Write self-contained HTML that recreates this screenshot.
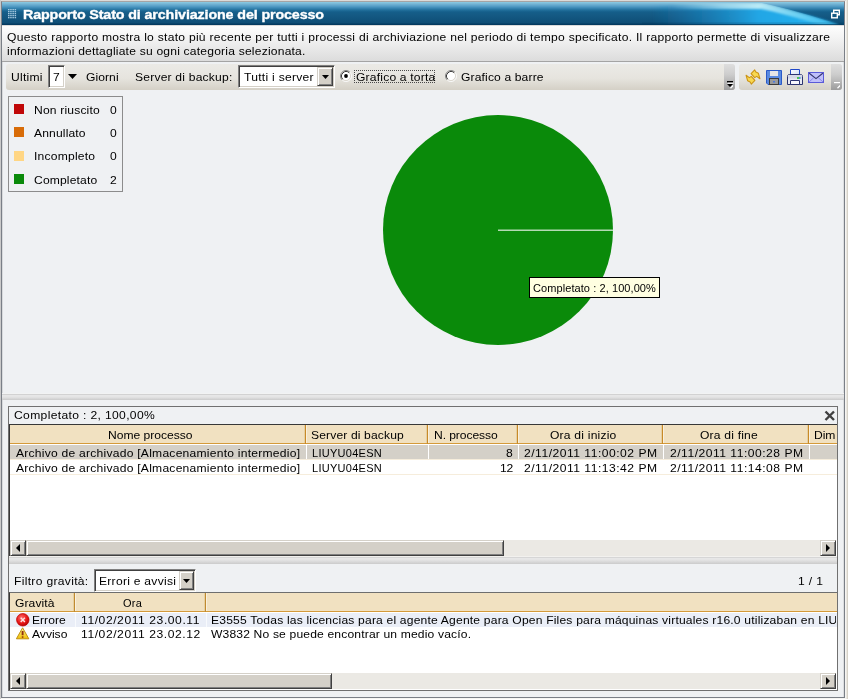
<!DOCTYPE html>
<html><head><meta charset="utf-8">
<style>
*{margin:0;padding:0;box-sizing:border-box}
html,body{width:848px;height:699px;overflow:hidden;background:#f6f5f2}
body{position:relative;font-family:"Liberation Sans",sans-serif;font-size:11px;color:#000}
.a{position:absolute}
.t{position:absolute;white-space:pre;will-change:transform;transform:scaleX(1.1);transform-origin:0 0;font-size:11px;line-height:13px;color:#000}
#win{left:1px;top:1px;width:844px;height:697px;border:1px solid #7a7f87;border-top-color:#a4a4a4;background:#eff1f3;box-shadow:inset 1px 0 0 #d8dadc,inset -1px 0 0 #dcdee0}
#title{left:2px;top:2px;width:842px;height:23px;background:linear-gradient(#8ccbe3 0px,#74b4d4 2px,#58a0c8 4px,#3a88b4 6px,#22709c 8px,#155e8a 10px,#145a84 13px,#0f4e76 21px,#043a60 22px,#043a60 23px)}
#desc{left:2px;top:25px;width:842px;height:37px;background:linear-gradient(#b8b8b8 0px,#fdfdfd 1px,#f4f4f4 12px,#dcdcdc 36px);border-bottom:1px solid #a4a4a4}
.tb{top:64px;height:26px;border-radius:3px;background:linear-gradient(#ebeae6,#e6e4de 55%,#d4d0c6)}
.grip{top:0;width:11px;height:26px;border-radius:0 3px 3px 0;background:linear-gradient(#dedede,#cdcdcd 40%,#9c9c9c)}
.sunk{border:1px solid;border-color:#808080 #fff #fff #808080}
.fld{border:1px solid;border-color:#808080 #fff #fff #808080;box-shadow:inset 1px 1px 0 #404040,inset -1px -1px 0 #d4d0c8;background:#fff}
.btn{background:#d4d0c8;border:1px solid;border-color:#d4d0c8 #404040 #404040 #d4d0c8;box-shadow:inset 1px 1px 0 #fff,inset -1px -1px 0 #808080}
</style></head><body>
<div class="a" style="left:0;top:0;width:848px;height:1px;background:#dcdad8"></div><div class="a" style="left:0;top:0;width:1px;height:699px;background:#cacaca"></div><div class="a" style="left:846px;top:0;width:1px;height:699px;background:#ebe8e2"></div><div class="a" style="left:847px;top:0;width:1px;height:699px;background:#d6d2c8"></div>
<div id="win" class="a"></div>
<div id="title" class="a">
  <svg class="a" style="left:0;top:0" width="842" height="23">
    <defs>
      <linearGradient id="sw" x1="650" y1="0" x2="843" y2="0" gradientUnits="userSpaceOnUse">
        <stop offset="0" stop-color="#1a80c0" stop-opacity="0"/>
        <stop offset="0.3" stop-color="#1c92d0" stop-opacity="0.6"/>
        <stop offset="0.55" stop-color="#22aaea" stop-opacity="0.95"/>
        <stop offset="1" stop-color="#28b8f4"/>
      </linearGradient>
      <linearGradient id="hl" x1="670" y1="0" x2="843" y2="0" gradientUnits="userSpaceOnUse">
        <stop offset="0" stop-color="#c0ecf8" stop-opacity="0"/>
        <stop offset="0.3" stop-color="#b8e8f6" stop-opacity="0.7"/>
        <stop offset="0.5" stop-color="#c0eef8" stop-opacity="0.95"/>
        <stop offset="0.75" stop-color="#80dcf6" stop-opacity="0.7"/>
        <stop offset="1" stop-color="#50ccf6" stop-opacity="0.15"/>
      </linearGradient>
      <clipPath id="cp"><path d="M640 1 H760 C785 6,810 14,843 24 V23 H640 Z"/></clipPath>
      <filter id="bl" x="-5%" y="-50%" width="110%" height="200%"><feGaussianBlur stdDeviation="1.2"/></filter>
    </defs>
    <filter id="bl2" x="-10%" y="-50%" width="120%" height="200%"><feGaussianBlur stdDeviation="0.9"/></filter><path d="M640 4 H755 C785 6,810 14,845 25 V23 H640 Z" fill="url(#sw)" filter="url(#bl2)"/>
    <g clip-path="url(#cp)"><path d="M660 4 H760 C785 9,810 17,843 27" fill="none" stroke="url(#hl)" stroke-width="6" filter="url(#bl)"/></g>
    <rect x="640" y="20" width="203" height="2" fill="#003050" opacity="0.12"/><rect x="640" y="22" width="203" height="1" fill="#043a60" opacity="0.7"/>
    <g fill="#b4d4e8" opacity="0.9"><rect x="6" y="7" width="1.5" height="1.3"/><rect x="8.2" y="7" width="1.5" height="1.3"/><rect x="10.4" y="7" width="1.5" height="1.3"/><rect x="12.6" y="7" width="1.5" height="1.3"/><rect x="6" y="9" width="1.5" height="1.3"/><rect x="8.2" y="9" width="1.5" height="1.3"/><rect x="10.4" y="9" width="1.5" height="1.3"/><rect x="12.6" y="9" width="1.5" height="1.3"/><rect x="6" y="11" width="1.5" height="1.3"/><rect x="8.2" y="11" width="1.5" height="1.3"/><rect x="10.4" y="11" width="1.5" height="1.3"/><rect x="12.6" y="11" width="1.5" height="1.3"/><rect x="6" y="13" width="1.5" height="1.3"/><rect x="8.2" y="13" width="1.5" height="1.3"/><rect x="10.4" y="13" width="1.5" height="1.3"/><rect x="12.6" y="13" width="1.5" height="1.3"/><rect x="6" y="15" width="1.5" height="1.3"/><rect x="8.2" y="15" width="1.5" height="1.3"/><rect x="10.4" y="15" width="1.5" height="1.3"/><rect x="12.6" y="15" width="1.5" height="1.3"/></g>
    <g fill="none" stroke="#fff" stroke-width="1.4">
      <rect x="829.7" y="11.2" width="5.6" height="4.6"/>
      <path d="M831.7 11.2V8.2H837.3V12.8H835.3"/>
    </g>
  </svg>
</div>
<div class="t" style="left:23px;top:7px;font-size:13px;line-height:16px;font-weight:bold;color:#fff;-webkit-text-stroke:0.35px #fff;letter-spacing:-0.12px">Rapporto Stato di archiviazione del processo</div>

<div id="desc" class="a"></div>
<div class="t" style="left:7px;top:31px;letter-spacing:0.238px">Questo rapporto mostra lo stato più recente per tutti i processi di archiviazione nel periodo di tempo specificato. Il rapporto permette di visualizzare</div>
<div class="t" style="left:7px;top:45px;letter-spacing:0.177px">informazioni dettagliate su ogni categoria selezionata.</div>

<!-- toolbar -->
<div class="a tb" style="left:6px;width:729px">
  <div class="a grip" style="left:718px"><svg class="a" style="left:0;top:0" width="11" height="26"><rect x="3" y="17" width="6" height="1.6" fill="#000"/><rect x="3.5" y="18.6" width="6" height="1.2" fill="#fff"/><path d="M3 20H9L6 23Z" fill="#000"/><path d="M5.8 24L9 20.8V22.6L7.2 24.4Z" fill="#fff"/></svg></div>
</div>
<div class="a tb" style="left:739px;width:103px">
  <div class="a grip" style="left:92px"><svg class="a" style="left:0;top:0" width="11" height="26"><rect x="3" y="18" width="6" height="1.2" fill="#fff"/><path d="M5.8 24L9 20.8V22.6L7.2 24.4Z" fill="#fff"/></svg></div>
</div>
<div class="t" style="left:11px;top:71px;letter-spacing:0.220px">Ultimi</div>
<div class="a fld" style="left:48px;top:65px;width:17px;height:23px"></div>
<div class="t" style="left:53px;top:71px;letter-spacing:-0.557px">7</div>
<svg class="a" style="left:68px;top:74px" width="10" height="6"><path d="M0 0H9L4.5 5Z" fill="#000"/></svg>
<div class="t" style="left:86px;top:71px;letter-spacing:0.057px">Giorni</div>
<div class="t" style="left:135px;top:71px;letter-spacing:0.178px">Server di backup:</div>
<div class="a fld" style="left:238px;top:65px;width:97px;height:23px"></div>
<div class="t" style="left:244px;top:71px;letter-spacing:0.246px">Tutti i server</div>
<div class="a btn" style="left:317px;top:67px;width:16px;height:19px"></div>
<svg class="a" style="left:322px;top:75px" width="8" height="5"><path d="M0 0H7L3.5 4Z" fill="#000"/></svg>


<!-- toolbar icons -->
<svg class="a" style="left:743px;top:67px" width="20" height="20">
  <g fill="#f8d850" stroke="#cc9414" stroke-width="1.1" stroke-linejoin="round">
    <path d="M8.1 6.6L11.7 2.9L12.9 5.1L15.4 6.3L16.9 11.7L13.7 9.4L11.7 10.6Z"/>
    <path d="M11.9 13.4L8.3 17.1L7.1 14.9L4.6 13.7L3.1 8.3L6.3 10.6L8.3 9.4Z"/>
  </g>
</svg>
<svg class="a" style="left:765px;top:69px" width="18" height="17">
  <path d="M1.5 1.5H16.5V15.5H3L1.5 14Z" fill="#5a8ae0" stroke="#2a5ac8"/>
  <rect x="5" y="2" width="8" height="5" fill="#e6e6e6"/>
  <rect x="4.5" y="9.5" width="9" height="6" fill="#9a9a9a" stroke="#3a3a3a"/>
  <rect x="8" y="12" width="2" height="1.5" fill="#4a7ae0"/>
</svg>
<svg class="a" style="left:786px;top:68px" width="18" height="18">
  <defs><linearGradient id="pp" x1="0" y1="0" x2="1" y2="1"><stop offset="0" stop-color="#fff"/><stop offset="1" stop-color="#c8d8f4"/></linearGradient></defs>
  <path d="M4.5 1.5H13.5V9H4.5Z" fill="url(#pp)" stroke="#2048c8"/>
  <path d="M1.5 8.5Q1.5 6.5 3.5 6.5H14.5Q16.5 6.5 16.5 8.5V16.5H1.5Z" fill="#e8eaf4" stroke="#2c3470"/>
  <rect x="2" y="7" width="14" height="3.5" fill="#d4d8e8"/>
  <path d="M4.5 12.5H13.5V16.5H4.5Z" fill="#f8f8fc" stroke="#2c3470"/>
  <rect x="11" y="9.2" width="2" height="1.6" fill="#30c030"/>
  <rect x="13" y="9.2" width="1.5" height="1.6" fill="#2090d0"/>
</svg>
<svg class="a" style="left:807px;top:71px" width="18" height="13">
  <rect x="1.5" y="1.5" width="15" height="10" fill="#c0c0fa" stroke="#5a5ad8"/>
  <path d="M2.2 2.2L9 7.6L15.8 2.2" fill="none" stroke="#34346e" stroke-width="1.2"/>
  <path d="M2 11L6.8 6.6M16 11L11.2 6.6" fill="none" stroke="#7a7ae6" stroke-width="0.8"/>
</svg>

<!-- chart area -->
<div class="a" style="left:8px;top:96px;width:115px;height:96px;border:1px solid #8c8c8c"></div>
<div class="a" style="left:14px;top:104px;width:10px;height:10px;background:#c00808"></div>
<div class="a" style="left:14px;top:127px;width:10px;height:10px;background:#d86c08"></div>
<div class="a" style="left:14px;top:151px;width:10px;height:10px;background:#ffd684"></div>
<div class="a" style="left:14px;top:174px;width:10px;height:10px;background:#0a8a0a"></div>
<div class="t" style="left:34px;top:104px;letter-spacing:0.152px">Non riuscito</div>
<div class="t" style="left:34px;top:127px;letter-spacing:0.128px">Annullato</div>
<div class="t" style="left:34px;top:150px;letter-spacing:0.193px">Incompleto</div>
<div class="t" style="left:34px;top:174px;letter-spacing:0.125px">Completato</div>
<div class="t" style="left:110px;top:104px;letter-spacing:-0.557px">0</div>
<div class="t" style="left:110px;top:127px;letter-spacing:-0.557px">0</div>
<div class="t" style="left:110px;top:150px;letter-spacing:-0.557px">0</div>
<div class="t" style="left:110px;top:174px;letter-spacing:-0.557px">2</div>

<svg class="a" style="left:0;top:0" width="848" height="400">
  <circle cx="498" cy="230" r="115" fill="#0a8a0a"/>
  <line x1="498" y1="230.3" x2="613" y2="230.3" stroke="#b4dab4" stroke-width="1.5"/>
</svg>
<div class="a" style="left:529px;top:277px;width:131px;height:21px;background:#ffffe1;border:1px solid #000"></div>
<div class="t" style="left:533px;top:282px;transform:none;letter-spacing:0.08px">Completato : 2, 100,00%</div>


<!-- radios -->
<svg class="a" style="left:340px;top:70px" width="12" height="12">
  <circle cx="6" cy="6" r="4.2" fill="#fff"/>
  <path d="M2.11 9.89A5.5 5.5 0 0 1 9.89 2.11" stroke="#868686" fill="none"/>
  <path d="M9.89 2.11A5.5 5.5 0 0 1 2.11 9.89" stroke="#fafafa" fill="none"/>
  <path d="M2.82 9.18A4.5 4.5 0 0 1 9.18 2.82" stroke="#3c3c3c" fill="none"/>
  <path d="M9.18 2.82A4.5 4.5 0 0 1 2.82 9.18" stroke="#dcd8d0" fill="none"/>
  <circle cx="6" cy="6" r="1.9" fill="#000"/>
</svg>
<div class="a" style="left:354px;top:70px;width:81px;height:13px;border:1px dotted #4a4a4a"></div>
<div class="t" style="left:356px;top:71px;letter-spacing:0.168px">Grafico a torta</div>
<svg class="a" style="left:445px;top:70px" width="12" height="12">
  <circle cx="6" cy="6" r="4.2" fill="#fff"/>
  <path d="M2.11 9.89A5.5 5.5 0 0 1 9.89 2.11" stroke="#868686" fill="none"/>
  <path d="M9.89 2.11A5.5 5.5 0 0 1 2.11 9.89" stroke="#fafafa" fill="none"/>
  <path d="M2.82 9.18A4.5 4.5 0 0 1 9.18 2.82" stroke="#3c3c3c" fill="none"/>
  <path d="M9.18 2.82A4.5 4.5 0 0 1 2.82 9.18" stroke="#dcd8d0" fill="none"/>
  
</svg>
<div class="t" style="left:461px;top:71px;letter-spacing:0.119px">Grafico a barre</div>

<!-- splitter -->
<div class="a" style="left:2px;top:393px;width:842px;height:7px;background:linear-gradient(#f2f3f3 0px,#f2f3f3 1px,#d2d2d2 1px,#d2d2d2 2px,#e8e8e8 2px,#e4e4e4 4px,#cbcbcb 7px)"></div>

<!-- details panel -->
<div class="a" style="left:8px;top:406px;width:830px;height:285px;border:1px solid #707070;background:#eff1f3"></div>
<div class="t" style="left:14px;top:409px;letter-spacing:0.313px">Completato : 2, 100,00%</div>
<svg class="a" style="left:824px;top:410px" width="12" height="12"><path d="M1.5 1.5L10 10M10 1.5L1.5 10" stroke="#404040" stroke-width="2.4"/></svg>

<!-- grid 1 -->
<div class="a" style="left:9px;top:424px;width:828px;height:132px;border-top:1px solid #383838;border-left:1px solid #383838;background:#fff;overflow:hidden">
  <div class="a" style="left:0;top:0;width:830px;height:18px;background:#f1e1c1"></div>
  <div class="a" style="left:0;top:18px;width:830px;height:1px;background:#d49a3a"></div>
  <div class="a" style="left:0;top:20px;width:830px;height:14px;background:#d4d0c8"></div>
  <div class="a" style="left:0;top:34px;width:830px;height:1px;background:#f6eddc"></div>
  <div class="a" style="left:0;top:49px;width:830px;height:1px;background:#f6eddc"></div>
</div>
<!-- column separators -->
<div class="a" style="left:304px;top:425px;width:1px;height:18px;background:#e6cfa0"></div><div class="a" style="left:305px;top:425px;width:1px;height:19px;background:#c88a28"></div><div class="a" style="left:306px;top:425px;width:1px;height:18px;background:#faf0dc"></div><div class="a" style="left:306px;top:445px;width:1px;height:14px;background:#fff"></div>
<div class="a" style="left:426px;top:425px;width:1px;height:18px;background:#e6cfa0"></div><div class="a" style="left:427px;top:425px;width:1px;height:19px;background:#c88a28"></div><div class="a" style="left:428px;top:425px;width:1px;height:18px;background:#faf0dc"></div><div class="a" style="left:428px;top:445px;width:1px;height:14px;background:#fff"></div>
<div class="a" style="left:516px;top:425px;width:1px;height:18px;background:#e6cfa0"></div><div class="a" style="left:517px;top:425px;width:1px;height:19px;background:#c88a28"></div><div class="a" style="left:518px;top:425px;width:1px;height:18px;background:#faf0dc"></div><div class="a" style="left:518px;top:445px;width:1px;height:14px;background:#fff"></div>
<div class="a" style="left:661px;top:425px;width:1px;height:18px;background:#e6cfa0"></div><div class="a" style="left:662px;top:425px;width:1px;height:19px;background:#c88a28"></div><div class="a" style="left:663px;top:425px;width:1px;height:18px;background:#faf0dc"></div><div class="a" style="left:663px;top:445px;width:1px;height:14px;background:#fff"></div>
<div class="a" style="left:807px;top:425px;width:1px;height:18px;background:#e6cfa0"></div><div class="a" style="left:808px;top:425px;width:1px;height:19px;background:#c88a28"></div><div class="a" style="left:809px;top:425px;width:1px;height:18px;background:#faf0dc"></div><div class="a" style="left:809px;top:445px;width:1px;height:14px;background:#fff"></div>
<div class="t" style="left:108px;top:429px;letter-spacing:-0.012px">Nome processo</div>
<div class="t" style="left:311px;top:429px;letter-spacing:0.122px">Server di backup</div>
<div class="t" style="left:434px;top:429px;letter-spacing:-0.077px">N. processo</div>
<div class="t" style="left:550px;top:429px;letter-spacing:0.185px">Ora di inizio</div>
<div class="t" style="left:700px;top:429px;letter-spacing:0.172px">Ora di fine</div>
<div class="t" style="left:814px;top:429px;letter-spacing:-0.048px">Dim</div>

<div class="t" style="left:16px;top:447px;letter-spacing:0.212px">Archivo de archivado [Almacenamiento intermedio]</div>
<div class="t" style="left:312px;top:447px;transform:none;letter-spacing:0.28px">LIUYU04ESN</div>
<div class="t" style="left:506px;top:447px;letter-spacing:-0.557px">8</div>
<div class="t" style="left:524px;top:447px;letter-spacing:0.452px">2/11/2011 11:00:02 PM</div>
<div class="t" style="left:670px;top:447px;letter-spacing:0.452px">2/11/2011 11:00:28 PM</div>
<div class="t" style="left:16px;top:462px;letter-spacing:0.212px">Archivo de archivado [Almacenamiento intermedio]</div>
<div class="t" style="left:312px;top:462px;transform:none;letter-spacing:0.28px">LIUYU04ESN</div>
<div class="t" style="left:500px;top:462px;letter-spacing:-0.102px">12</div>
<div class="t" style="left:524px;top:462px;letter-spacing:0.452px">2/11/2011 11:13:42 PM</div>
<div class="t" style="left:670px;top:462px;letter-spacing:0.452px">2/11/2011 11:14:08 PM</div>

<!-- hscroll 1 -->
<div class="a" style="left:10px;top:540px;width:826px;height:16px;background:#ebe9e4"></div>
<div class="a btn" style="left:10px;top:540px;width:16px;height:16px"></div>
<svg class="a" style="left:14px;top:544px" width="8" height="8"><path d="M6 0V8L2 4Z" fill="#000"/></svg>
<div class="a btn" style="left:26px;top:540px;width:478px;height:16px"></div>
<div class="a btn" style="left:820px;top:540px;width:16px;height:16px"></div>
<svg class="a" style="left:824px;top:544px" width="8" height="8"><path d="M2 0V8L6 4Z" fill="#000"/></svg>

<!-- splitter 2 -->
<div class="a" style="left:9px;top:556px;width:828px;height:8px;background:linear-gradient(#f2f1ee 0px,#f2f1ee 1px,#d6d6d6 1px,#d6d6d6 2px,#e8e8e8 2px,#e4e4e4 4px,#cbcbcb 8px)"></div>

<div class="t" style="left:14px;top:575px;letter-spacing:0.279px">Filtro gravità:</div>
<div class="a fld" style="left:94px;top:569px;width:102px;height:23px"></div>
<div class="t" style="left:99px;top:575px;letter-spacing:0.233px">Errori e avvisi</div>
<div class="a btn" style="left:179px;top:571px;width:15px;height:19px"></div>
<svg class="a" style="left:183px;top:579px" width="8" height="5"><path d="M0 0H7L3.5 4Z" fill="#000"/></svg>
<div class="t" style="left:798px;top:575px;letter-spacing:0.338px">1 / 1</div>

<!-- grid 2 -->
<div class="a" style="left:9px;top:592px;width:828px;height:98px;border-top:1px solid #6e6e6e;border-left:1px solid #383838;background:#fff;overflow:hidden">
  <div class="a" style="left:0;top:0;width:830px;height:18px;background:#f1e1c1"></div>
  <div class="a" style="left:0;top:18px;width:830px;height:1px;background:#d49a3a"></div>
  <div class="a" style="left:0;top:20px;width:830px;height:14px;background:#eaeef7"></div>
</div>
<div class="a" style="left:73px;top:593px;width:1px;height:18px;background:#e6cfa0"></div><div class="a" style="left:74px;top:593px;width:1px;height:19px;background:#c08a30"></div><div class="a" style="left:75px;top:593px;width:1px;height:18px;background:#faf0dc"></div><div class="a" style="left:75px;top:613px;width:1px;height:14px;background:#f8fafd"></div>
<div class="a" style="left:204px;top:593px;width:1px;height:18px;background:#e6cfa0"></div><div class="a" style="left:205px;top:593px;width:1px;height:19px;background:#c08a30"></div><div class="a" style="left:206px;top:593px;width:1px;height:18px;background:#faf0dc"></div><div class="a" style="left:206px;top:613px;width:1px;height:14px;background:#f8fafd"></div>
<div class="t" style="left:15px;top:597px;letter-spacing:0.083px">Gravità</div>
<div class="t" style="left:123px;top:597px;transform:none;letter-spacing:0.3px">Ora</div>
<svg class="a" style="left:15.6px;top:613px" width="14" height="14">
  <defs><radialGradient id="rg" cx="0.4" cy="0.35" r="0.7"><stop offset="0" stop-color="#ff7070"/><stop offset="0.6" stop-color="#e81818"/><stop offset="1" stop-color="#b00000"/></radialGradient></defs>
  <circle cx="6.8" cy="6.8" r="6.2" fill="url(#rg)" stroke="#c00000" stroke-width="0.8"/><path d="M4.7 4.7L8.9 8.9M8.9 4.7L4.7 8.9" stroke="#ffe0e0" stroke-width="1.4"/></svg>
<div class="t" style="left:32px;top:614px;letter-spacing:0.010px">Errore</div>
<div class="t" style="left:81px;top:614px;letter-spacing:0.510px">11/02/2011 23.00.11</div>
<div class="a" style="left:207px;top:612px;width:629px;height:30px;overflow:hidden"><div class="t" style="left:4px;top:2px;letter-spacing:0.164px">E3555 Todas las licencias para el agente Agente para Open Files para máquinas virtuales r16.0 utilizaban en LIUYU04ESN</div></div>
<svg class="a" style="left:15.7px;top:627px" width="14" height="13">
  <defs><linearGradient id="wg" x1="0" y1="0" x2="0" y2="1"><stop offset="0" stop-color="#fff4a0"/><stop offset="1" stop-color="#f0c000"/></linearGradient></defs>
  <path d="M6.6 0.8L12.8 11.8H0.4Z" fill="url(#wg)" stroke="#c09010" stroke-width="1" stroke-linejoin="round"/><path d="M6.6 4V8.2" stroke="#903010" stroke-width="1.9"/><path d="M6.6 9.3V10.8" stroke="#903010" stroke-width="1.6"/></svg>
<div class="t" style="left:32px;top:628px;letter-spacing:-0.005px">Avviso</div>
<div class="t" style="left:81px;top:628px;letter-spacing:0.507px">11/02/2011 23.02.12</div>
<div class="t" style="left:211px;top:628px;letter-spacing:0.140px">W3832 No se puede encontrar un medio vacío.</div>

<!-- hscroll 2 -->
<div class="a" style="left:10px;top:673px;width:826px;height:16px;background:#ebe9e4"></div>
<div class="a btn" style="left:10px;top:673px;width:16px;height:16px"></div>
<svg class="a" style="left:14px;top:677px" width="8" height="8"><path d="M6 0V8L2 4Z" fill="#000"/></svg>
<div class="a btn" style="left:26px;top:673px;width:306px;height:16px"></div>
<div class="a btn" style="left:820px;top:673px;width:16px;height:16px"></div>
<svg class="a" style="left:824px;top:677px" width="8" height="8"><path d="M2 0V8L6 4Z" fill="#000"/></svg>

</body></html>
